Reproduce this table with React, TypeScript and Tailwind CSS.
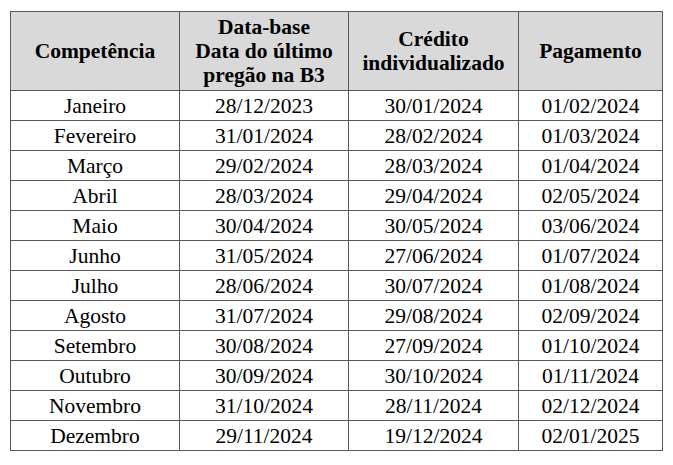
const rows: [string, string, string, string][] = [
  ["Janeiro", "28/12/2023", "30/01/2024", "01/02/2024"],
  ["Fevereiro", "31/01/2024", "28/02/2024", "01/03/2024"],
  ["Março", "29/02/2024", "28/03/2024", "01/04/2024"],
  ["Abril", "28/03/2024", "29/04/2024", "02/05/2024"],
  ["Maio", "30/04/2024", "30/05/2024", "03/06/2024"],
  ["Junho", "31/05/2024", "27/06/2024", "01/07/2024"],
  ["Julho", "28/06/2024", "30/07/2024", "01/08/2024"],
  ["Agosto", "31/07/2024", "29/08/2024", "02/09/2024"],
  ["Setembro", "30/08/2024", "27/09/2024", "01/10/2024"],
  ["Outubro", "30/09/2024", "30/10/2024", "01/11/2024"],
  ["Novembro", "31/10/2024", "28/11/2024", "02/12/2024"],
  ["Dezembro", "29/11/2024", "19/12/2024", "02/01/2025"],
]

const cell = "border border-[#595959] p-0 font-['Liberation_Serif',serif]"

export default function App() {
  return (
    <div className="min-h-[465px] bg-white pl-[10px] pt-[11px] font-['Liberation_Serif',serif] text-black">
      <table className="w-[652px] table-fixed border-collapse text-center font-['Liberation_Serif',serif] text-[21.5px] text-black">
        <colgroup>
          <col className="w-[169px]" />
          <col className="w-[169px]" />
          <col className="w-[170px]" />
          <col className="w-[144px]" />
        </colgroup>
        <thead>
          <tr className="h-[79px] bg-[#d9d9d9] font-bold leading-[24px]">
            <th className={cell}>Competência</th>
            <th className={cell}>
              Data-base
              <br />
              Data do último
              <br />
              pregão na B3
            </th>
            <th className={cell}>
              Crédito
              <br />
              individualizado
            </th>
            <th className={cell}>Pagamento</th>
          </tr>
        </thead>
        <tbody>
          {rows.map((r) => (
            <tr key={r[0]} className="h-[30px] leading-[24px]">
              {r.map((c, i) => (
                <td key={i} className={cell}>
                  {c}
                </td>
              ))}
            </tr>
          ))}
        </tbody>
      </table>
    </div>
  )
}
